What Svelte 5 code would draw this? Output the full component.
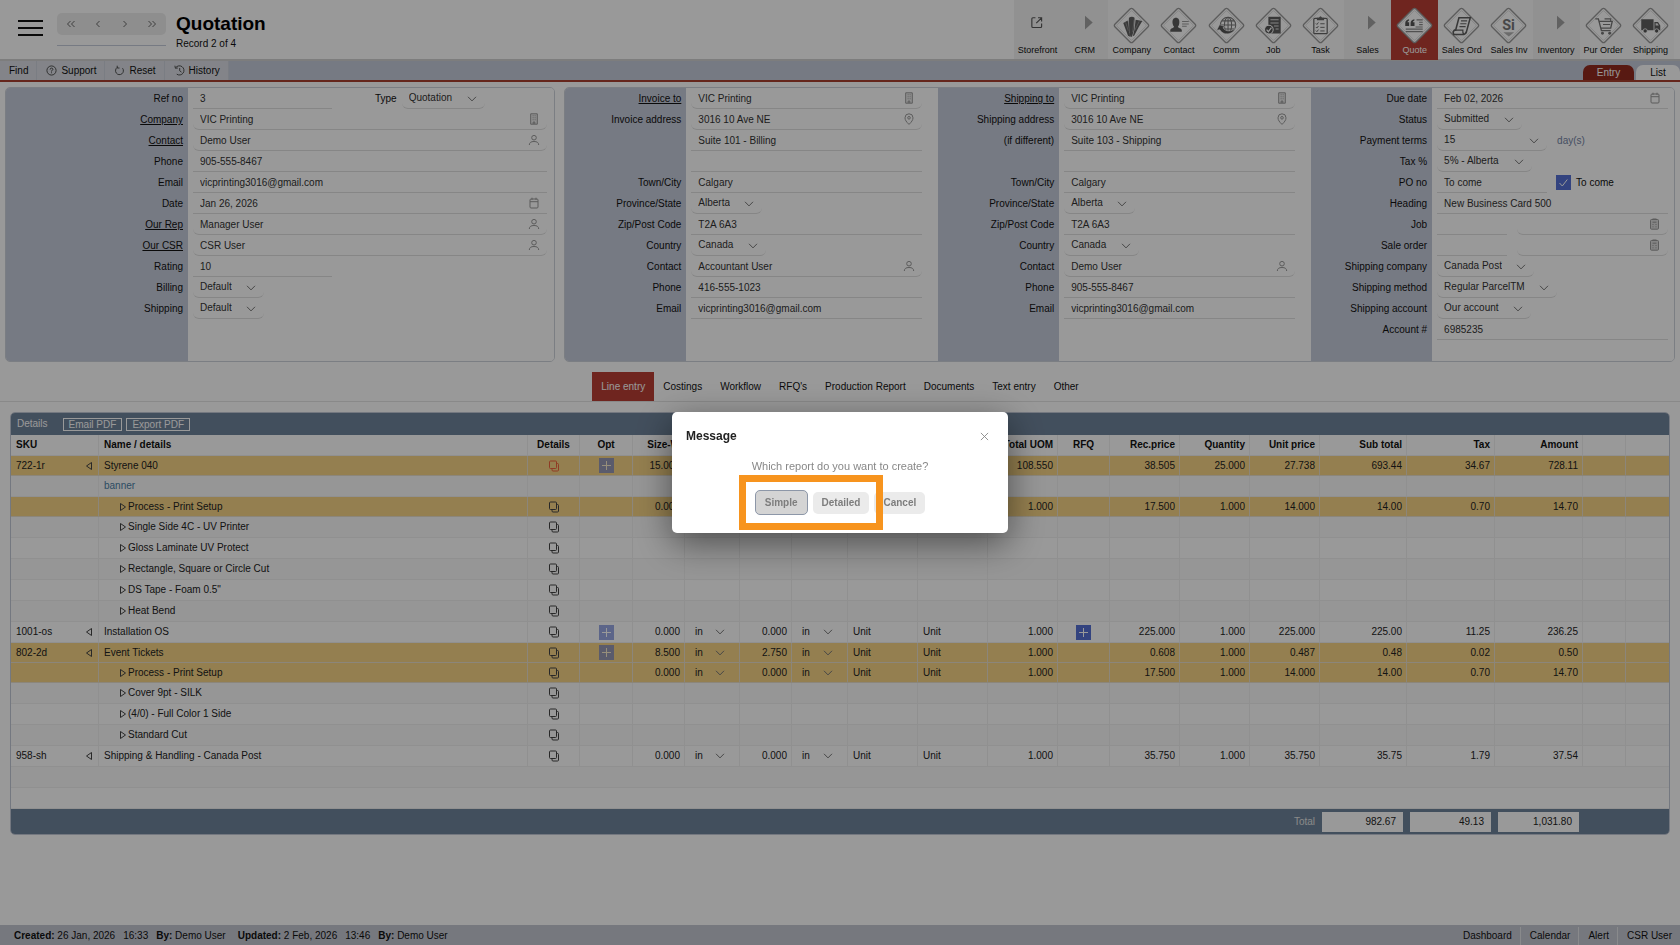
<script>
  const modules = [
    { name: 'Storefront', icon: 'storefront', group: true },
    { name: 'CRM', icon: 'arrow', group: true },
    { name: 'Company', icon: 'company' },
    { name: 'Contact', icon: 'contact' },
    { name: 'Comm', icon: 'comm' },
    { name: 'Job', icon: 'job' },
    { name: 'Task', icon: 'task' },
    { name: 'Sales', icon: 'arrow', group: true },
    { name: 'Quote', icon: 'quote', active: true },
    { name: 'Sales Ord', icon: 'order' },
    { name: 'Sales Inv', icon: 'invoice' },
    { name: 'Inventory', icon: 'arrow', group: true },
    { name: 'Pur Order', icon: 'cart' },
    { name: 'Shipping', icon: 'truck' }
  ];

  const customer = [
    { id: 'ref', label: 'Ref no', value: '3', short: true, type: 'Quotation' },
    { id: 'company', label: 'Company', link: true, value: 'VIC Printing', icon: 'building' },
    { id: 'contact', label: 'Contact', link: true, value: 'Demo User', icon: 'person' },
    { id: 'phone', label: 'Phone', value: '905-555-8467' },
    { id: 'email', label: 'Email', value: 'vicprinting3016@gmail.com' },
    { id: 'date', label: 'Date', value: 'Jan 26, 2026', icon: 'calendar', flat: true },
    { id: 'rep', label: 'Our Rep', link: true, value: 'Manager User', icon: 'person' },
    { id: 'csr', label: 'Our CSR', link: true, value: 'CSR User', icon: 'person' },
    { id: 'rating', label: 'Rating', value: '10', short: true },
    { id: 'billing', label: 'Billing', value: 'Default', select: true },
    { id: 'shipping', label: 'Shipping', value: 'Default', select: true }
  ];

  const address = (key, title, addressLabel, second, suite, contact, phone) => [
    { id: key + '-to', label: title, link: true, value: 'VIC Printing', icon: 'building' },
    { id: key + '-address', label: addressLabel, value: '3016 10 Ave NE', icon: 'pin' },
    { id: key + '-address2', label: second, value: suite },
    { id: key + '-address3', label: '', value: '' },
    { id: key + '-town', label: 'Town/City', value: 'Calgary' },
    { id: key + '-state', label: 'Province/State', value: 'Alberta', select: true },
    { id: key + '-zip', label: 'Zip/Post Code', value: 'T2A 6A3' },
    { id: key + '-country', label: 'Country', value: 'Canada', select: true },
    { id: key + '-contact', label: 'Contact', value: contact, icon: 'person' },
    { id: key + '-phone', label: 'Phone', value: phone },
    { id: key + '-email', label: 'Email', value: 'vicprinting3016@gmail.com' }
  ];
  const invoiceTo = address('inv', 'Invoice to', 'Invoice address', '', 'Suite 101 - Billing', 'Accountant User', '416-555-1023');
  const shipTo = address('ship', 'Shipping to', 'Shipping address', '(if different)', 'Suite 103 - Shipping', 'Demo User', '905-555-8467');

  const order = [
    { id: 'due', label: 'Due date', value: 'Feb 02, 2026', icon: 'calendar', flat: true },
    { id: 'status', label: 'Status', value: 'Submitted', select: true },
    { id: 'terms', label: 'Payment terms', value: '15', select: true, fixed: true, after: 'day(s)' },
    { id: 'tax', label: 'Tax %', value: '5% - Alberta', select: true },
    { id: 'po', label: 'PO no', value: 'To come', fixed: true, check: 'To come' },
    { id: 'heading', label: 'Heading', value: 'New Business Card 500' },
    { id: 'job', label: 'Job', pair: true },
    { id: 'sale', label: 'Sale order', pair: true },
    { id: 'carrier', label: 'Shipping company', value: 'Canada Post', select: true },
    { id: 'method', label: 'Shipping method', value: 'Regular ParcelTM', select: true },
    { id: 'account', label: 'Shipping account', value: 'Our account', select: true },
    { id: 'number', label: 'Account #', value: '6985235' }
  ];

  const tabs = ['Line entry', 'Costings', 'Workflow', "RFQ's", 'Production Report', 'Documents', 'Text entry', 'Other'];

  const columns = [
    ['SKU', 88], ['Name / details', 0], ['Details', 52, 'mid'], ['Opt', 53, 'mid'], ['Size-W', 52, 'num'],
    ['', 55], ['', 52], ['', 56], ['', 70], ['', 70], ['Total UOM', 70, 'num'], ['RFQ', 52, 'mid'],
    ['Rec.price', 70, 'num'], ['Quantity', 70, 'num'], ['Unit price', 70, 'num'], ['Sub total', 87, 'num'],
    ['Tax', 88, 'num'], ['Amount', 88, 'num'], ['', 43], ['', 43]
  ];

  const lines = [
    { sku: '722-1r', name: 'Styrene 040', fill: true, hot: true, opt: true, w: '15.000', uom: '108.550', money: ['38.505', '25.000', '27.738', '693.44', '34.67', '728.11'] },
    { name: 'banner', note: true },
    { name: 'Process - Print Setup', child: true, fill: true, w: '0.000', uom: '1.000', money: ['17.500', '1.000', '14.000', '14.00', '0.70', '14.70'] },
    { name: 'Single Side 4C - UV Printer', child: true },
    { name: 'Gloss Laminate UV Protect', child: true },
    { name: 'Rectangle, Square or Circle Cut', child: true },
    { name: 'DS Tape - Foam 0.5"', child: true },
    { name: 'Heat Bend', child: true },
    { sku: '1001-os', name: 'Installation OS', opt: true, rfq: true, w: '0.000', h: '0.000', uom: '1.000', money: ['225.000', '1.000', '225.000', '225.00', '11.25', '236.25'] },
    { sku: '802-2d', name: 'Event Tickets', fill: true, opt: true, w: '8.500', h: '2.750', uom: '1.000', money: ['0.608', '1.000', '0.487', '0.48', '0.02', '0.50'] },
    { name: 'Process - Print Setup', child: true, fill: true, w: '0.000', h: '0.000', uom: '1.000', money: ['17.500', '1.000', '14.000', '14.00', '0.70', '14.70'] },
    { name: 'Cover 9pt - SILK', child: true },
    { name: '(4/0) - Full Color 1 Side', child: true },
    { name: 'Standard Cut', child: true },
    { sku: '958-sh', name: 'Shipping & Handling - Canada Post', w: '0.000', h: '0.000', uom: '1.000', money: ['35.750', '1.000', '35.750', '35.75', '1.79', '37.54'] }
  ];
  const blanks = ['', '', '', '', '', ''];
</script>

{#snippet chevron()}
  <svg class="chevron" viewBox="0 0 10 6" aria-hidden="true"><path d="M1 .8 5 4.9 9 .8" /></svg>
{/snippet}

{#snippet fieldIcon(kind)}
  <svg class="field-icon" viewBox="0 0 12 12" aria-hidden="true">
    {#if kind === 'building'}
      <path d="M2.700.8h6.600v10.400H2.700z" fill="#eee" />
      <path d="M4.600 2.800h1M6.600 2.800h1M4.600 4.800h1M6.600 4.800h1M4.600 6.800h1M6.600 6.800h1M5.200 11V9h1.600v2" />
    {:else if kind === 'person'}
      <circle cx="6" cy="3.700" r="2.300" /><path d="M1.300 11c.1-2.500 1.700-3.500 4.700-3.500s4.600 1 4.700 3.500" />
    {:else if kind === 'pin'}
      <path d="M6 11.400C3.300 8.800 2 7 2 4.800a4 4 0 0 1 8 0C10 7 8.700 8.800 6 11.400Z" /><circle cx="6" cy="4.800" r="1.300" />
    {:else if kind === 'calendar'}
      <rect x="2" y="2" width="8" height="9" rx="1" /><path d="M2 4.700h8M4 .7v2.200M8 .7v2.200" />
    {:else}
      <rect x="1.500" y="1.500" width="8" height="9.700" rx="1" fill="#ddd" /><path d="M3.500 1h4M3.500 4.200h4M3.500 6.500h1M6.500 6.500h1M3.500 8.800h1M6.500 8.800h1" />
    {/if}
  </svg>
{/snippet}

{#snippet selectBox(id, value, label, fixed)}
  <span class="select" class:fixed>
    <select {id} aria-label={label}><option>{value}</option></select>
    {@render chevron()}
  </span>
{/snippet}

{#snippet column(rows)}
  {#each rows as f}
    <div class="row">
      <label for={f.id} class:link={f.link}>{f.label}</label>
      <div class="value">
        {#if f.pair}
          <span class="box code"><input id={f.id} type="text" /></span>
          <span class="box round grow"><input type="text" aria-label={f.label} />{@render fieldIcon('list')}</span>
        {:else if f.select}
          {@render selectBox(f.id, f.value, undefined, f.fixed)}
          {#if f.after}<span class="after">{f.after}</span>{/if}
        {:else}
          <span class="box" class:grow={!f.short && !f.fixed} class:short={f.short} class:fixed={f.fixed} class:round={f.icon && !f.flat}>
            <input id={f.id} type="text" value={f.value} aria-label={f.label ? undefined : 'Address line'} />
            {#if f.icon}{@render fieldIcon(f.icon)}{/if}
          </span>
          {#if f.type}
            <label class="type" for="type">Type</label>
            {@render selectBox('type', f.type)}
          {/if}
          {#if f.check}
            <label class="check">
              <input type="checkbox" checked />
              <svg viewBox="0 0 15 15" aria-hidden="true"><path d="m3.500 8 2.800 3 5-6.500" /></svg>
              {f.check}
            </label>
          {/if}
        {/if}
      </div>
    </div>
  {/each}
{/snippet}

{#snippet plus(soft, label)}
  <button class="plus" class:soft aria-label={label}>
    <svg viewBox="0 0 15 15" aria-hidden="true"><path d="M7.500 3v9M3 7.500h9" /></svg>
  </button>
{/snippet}

{#snippet moduleIcon(kind)}
  <svg class="module-icon" viewBox="0 0 36 36" aria-hidden="true">
    {#if kind === 'arrow'}
      <path d="M18.500 8.500 26 15l-7.500 7z" fill="#a2a2a2" />
    {:else if kind === 'storefront'}
      <path d="M16 10.500h-2.500q-1 0-1 1v7.500q0 1 1 1H21q1 0 1-1V16M18.500 10.500H22V14M22 10.500 16.800 15.700" fill="none" stroke="#555" stroke-width="1.100" />
    {:else}
      <rect x="5.700" y="5.700" width="24.600" height="24.600" rx="2" transform="rotate(45 18 18)" fill="#fff" stroke="#999" stroke-width="1.300" />
      <rect x="7.600" y="7.600" width="20.800" height="20.800" rx="1" transform="rotate(45 18 18)" fill="none" stroke="#d8d8d8" stroke-width=".7" />
      {#if kind === 'company'}
        <g fill="#616161">
          <path d="M15.500 10.500q3-2 5.500 0l-.5 11-2 7.500h-1.500l-2-7.500z" />
          <path d="m10 15.500 4.300-2.300 2 12.300.3 3.500-2-1z" />
          <path d="m22 12.500 6.500 1.200-3.200 5.300-4.600 8.800-1.400.7 1.700-7.300z" />
        </g>
        <path d="m15 13.500 1.200 12M20.500 12.500l-1.300 12M12.300 15l2.500 8M25.500 14 21 23" stroke="#bbb" stroke-width=".5" fill="none" />
      {:else if kind === 'contact'}
        <path d="M12.300 16.200c-.6-3.700.9-5.700 3.200-5.700s3.800 2 3.200 5.700c-.3 1.700-.9 2.300-1.300 3 .3 1.300 3.600 1.500 3.800 3.100v1.900H10v-1.900c.2-1.600 3.400-1.800 3.700-3.100-.4-.7-1.100-1.300-1.400-3Z" fill="#5c5c5c" />
        <path d="M21.500 14.200H28M21.500 16.500H28M21.500 18.800h4.500" stroke="#9b9b9b" fill="none" />
      {:else if kind === 'comm'}
        <g fill="none" stroke="#777"><circle cx="19.500" cy="17.500" r="7.500" /><ellipse cx="19.500" cy="17.500" rx="3.500" ry="7.500" /><path d="M12 17.500h15M13.500 13.500h12M13.500 21.500h12M19.500 10v15" /></g>
        <path d="m8.500 22.500 2.800-5.300 5.500 2-2.200.9c2.400 4.200 8 4.200 11.900.5-2.500 6.500-11.700 7.600-15 1.500z" fill="#555" stroke="#fff" stroke-width=".5" />
      {:else if kind === 'job'}
        <path d="M13 9.500h12v16.300H13z" fill="#5e5e5e" /><path d="M15 12.500h8M15 15.500h8M18.500 18.500H23M20 21.500h3" stroke="#ddd" />
        <circle cx="13.500" cy="22" r="4.200" fill="#555" stroke="#fff" /><path d="m11.300 22 1.700 2 3-4" fill="none" stroke="#fff" stroke-width="1.200" />
      {:else if kind === 'task'}
        <rect x="11.500" y="11" width="13" height="15" rx="1" fill="none" stroke="#666" stroke-width="1.200" />
        <path d="M14.500 12.800v-2.300h2q1.500-3 3 0h2v2.300z" fill="#666" />
        <path d="m13.500 16 1 1 1.500-2M13.500 19.500l1 1 1.500-2M13.500 23l1 1 1.500-2M17.800 16.300H22M17.800 19.800H22M17.800 23.300H22" fill="none" stroke="#666" stroke-width=".9" />
      {:else if kind === 'quote'}
        <path d="M9 17.500v-2q.2-3 3.700-3.600v1.200q-1.500.6-1.500 1.700h1.600v3.700H9zM14.200 17.500v-2q.2-3 3.700-3.600v1.200q-1.500.6-1.500 1.700H18v3.700h-3.800z" fill="#555" />
        <path d="M20 12.500h6M22.500 14.800H26M22.500 17.200H26M19 19.500h7M9.500 21.500H26M9.500 24H26" stroke="#888" stroke-width="1.100" />
      {:else if kind === 'order'}
        <path d="M15.500 10.500h11l-3.700 13.700q-1 2.600-3.800 2.600h-8.500q-1.500-2.600.6-4.300h1.200z" fill="#fff" stroke="#5e5e5e" stroke-width="1.500" />
        <path d="M12.300 22.500h7q-.3 2.500.8 3.800" fill="none" stroke="#5e5e5e" stroke-width="1.200" />
        <path d="M17.500 13.500h6M16.800 16.300h6M16 19.100h6" stroke="#666" stroke-width="1.100" />
      {:else if kind === 'invoice'}
        <text x="18" y="22" text-anchor="middle">Si</text>
        <path d="M13 24.500h10.500l-5.200 4.300z" fill="#b3b3b3" />
      {:else if kind === 'cart'}
        <path d="M10 11.500h3l3 11.500h9M14 14h12.500l-1.500 6.500h-9.200" fill="none" stroke="#777" stroke-width="1.300" />
        <path d="M17.500 17h7M19 11.500h6v3" fill="none" stroke="#777" stroke-width="1.100" /><circle cx="17" cy="25.500" r="1.400" fill="#777" /><circle cx="24" cy="25.500" r="1.400" fill="#777" />
      {:else}
        <path d="M9 12h12v10.500H9zM21.800 14.500h3.500l2.200 3.500v4.500h-5.700z" fill="#606060" /><path d="M23 15.700h1.700l1.400 2.300H23z" fill="#eee" />
        <circle cx="12.800" cy="23.300" r="2.100" fill="#555" stroke="#fff" stroke-width=".8" /><circle cx="24" cy="23.300" r="2.100" fill="#555" stroke="#fff" stroke-width=".8" />
      {/if}
    {/if}
  </svg>
{/snippet}

<div class="page">
  <header>
    <button class="menu" aria-label="Menu"><i></i><i></i><i></i></button>
    <div class="pager">
      <div class="pager-buttons">
        <button aria-label="First"><svg viewBox="0 0 10 8"><path d="M4.500 1 1.500 4l3 3M8.500 1l-3 3 3 3" /></svg></button>
        <button aria-label="Previous"><svg viewBox="0 0 10 8"><path d="M6.500 1l-3 3 3 3" /></svg></button>
        <button aria-label="Next"><svg viewBox="0 0 10 8"><path d="m3.500 1 3 3-3 3" /></svg></button>
        <button aria-label="Last"><svg viewBox="0 0 10 8"><path d="m1.500 1 3 3-3 3M5.500 1l3 3-3 3" /></svg></button>
      </div>
    </div>
    <div class="title">
      <h1>Quotation</h1>
      <p>Record 2 of 4</p>
    </div>
    <nav class="modules">
      {#each modules as m}
        <button class:group={m.group} class:active={m.active}>
          {@render moduleIcon(m.icon)}
          <span>{m.name}</span>
        </button>
      {/each}
    </nav>
  </header>

  <div class="toolbar">
    <button>Find</button>
    <button><svg viewBox="0 0 12 12"><circle cx="6" cy="6" r="5" /><path d="M4.500 5q0-1.600 1.500-1.600T7.500 4.800Q7.500 5.700 6 6.300v.8M6 8v1" /></svg>Support</button>
    <button><svg viewBox="0 0 12 12"><path d="M3.500 2.700A4.300 4.300 0 1 0 9.300 3.500M3.500.8v2.500H6" /></svg>Reset</button>
    <button><svg viewBox="0 0 12 12"><path d="M1.800 3A5 5 0 1 1 3 10M1 .8 1.500 3.500 4.200 3.300M6.200 3.300v3l2 1.500" /></svg>History</button>
    <div class="views"><button class="on">Entry</button><button>List</button></div>
  </div>

  <main>
    <div class="panels">
      <section class="panel">
        <div class="col wide">{@render column(customer)}</div>
      </section>
      <section class="panel three">
        <div class="col spaced">{@render column(invoiceTo)}</div>
        <div class="col spaced">{@render column(shipTo)}</div>
        <div class="col">{@render column(order)}</div>
      </section>
    </div>

    <nav class="tabs">
      {#each tabs as tab, i}<button class:on={i === 0}>{tab}</button>{/each}
    </nav>

    <section class="grid">
      <div class="band">
        <span>Details</span>
        <button>Email PDF</button>
        <button>Export PDF</button>
      </div>
      <table>
        <colgroup>
          {#each columns as c}<col style={c[1] ? `width: ${c[1]}px` : ''} />{/each}
        </colgroup>
        <thead>
          <tr>{#each columns as c}<th class={c[2]}>{c[0]}</th>{/each}</tr>
        </thead>
        <tbody>
          {#each lines as l}
            <tr class:fill={l.fill}>
              <td>
                {#if l.sku}
                  <div class="sku">{l.sku}<svg class="tri" viewBox="0 0 8 10" aria-hidden="true"><path d="M6.500 1.500v7L1.500 5z" /></svg></div>
                {/if}
              </td>
              <td class:note={l.note}>
                {#if l.child}
                  <div class="child"><svg class="tri" viewBox="0 0 8 10" aria-hidden="true"><path d="M1.500 1.500v7l5-3.500z" /></svg>{l.name}</div>
                {:else}{l.name}{/if}
              </td>
              <td class="mid">
                {#if !l.note}
                  <button class="copy" class:hot={l.hot} aria-label="Details">
                    <svg viewBox="0 0 12 12"><rect x="1.500" y="1" width="7" height="7.500" rx="1" /><path d="M4 8.500v1.500q0 1 1 1h4.500q1 0 1-1V4.500q0-1-1-1h-1" /></svg>
                  </button>
                {/if}
              </td>
              <td class="mid">{#if l.opt}{@render plus(true, 'Options')}{/if}</td>
              <td class="num">{l.w ?? ''}</td>
              <td class="unit">{#if l.h}{@render selectBox(undefined, 'in', 'Width unit')}{/if}</td>
              <td class="num">{l.h ?? ''}</td>
              <td class="unit">{#if l.h}{@render selectBox(undefined, 'in', 'Height unit')}{/if}</td>
              <td>{l.h ? 'Unit' : ''}</td>
              <td>{l.h ? 'Unit' : ''}</td>
              <td class="num">{l.uom ?? ''}</td>
              <td class="mid">{#if l.rfq}{@render plus(false, 'Request for quote')}{/if}</td>
              {#each l.money ?? blanks as v}<td class="num">{v}</td>{/each}
              <td></td>
              <td></td>
            </tr>
          {/each}
          <tr><td colspan="20"></td></tr>
          <tr><td colspan="20"></td></tr>
        </tbody>
      </table>
      <div class="totals">
        <span>Total</span>
        <output>982.67</output>
        <output>49.13</output>
        <output>1,031.80</output>
      </div>
    </section>
  </main>

  <footer>
    <p><b>Created:</b> 26 Jan, 2026</p>
    <p>16:33</p>
    <p class="by"><b>By:</b> Demo User</p>
    <p><b>Updated:</b> 2 Feb, 2026</p>
    <p>13:46</p>
    <p><b>By:</b> Demo User</p>
    <nav><a href="#dashboard">Dashboard</a><a href="#calendar">Calendar</a><a href="#alert">Alert</a><a href="#user">CSR User</a></nav>
  </footer>
</div>

<div class="overlay">
  <div class="dialog" role="dialog" aria-modal="true" aria-labelledby="dialog-title">
    <div class="dialog-head">
      <h2 id="dialog-title">Message</h2>
      <button aria-label="Close"><svg viewBox="0 0 10 10"><path d="m1 1 8 8M9 1 1 9" /></svg></button>
    </div>
    <p>Which report do you want to create?</p>
    <div class="choices">
      <button class="chosen">Simple</button>
      <button>Detailed</button>
      <button>Cancel</button>
      <div class="marker" aria-hidden="true"></div>
    </div>
  </div>
</div>

<style>
  :global(body) {
    margin: 0;
    background: #fff;
  }
  .page,
  .overlay {
    font: 10px/12px 'Liberation Sans', Arial, sans-serif;
    color: #111;
  }
  .page :global(*),
  .overlay :global(*) {
    box-sizing: border-box;
  }
  button,
  input,
  select {
    font: inherit;
    color: inherit;
    border: 0;
    background: none;
    padding: 0;
    margin: 0;
    border-radius: 0;
  }
  h1,
  h2,
  p {
    margin: 0;
  }
  svg {
    fill: none;
    stroke: #444;
    flex: none;
  }
  .page {
    min-height: 100vh;
    display: flex;
    flex-direction: column;
  }

  header {
    display: flex;
    align-items: flex-start;
    height: 61px;
    border-bottom: 2px solid #d0d0d0;
    padding: 0 6px 0 18px;
  }
  .menu {
    width: 25px;
    margin-top: 20px;
    display: flex;
    flex-direction: column;
    gap: 5px;
  }
  .menu i {
    display: block;
    width: 100%;
    height: 2px;
    background: #111;
  }
  .pager {
    width: 109px;
    height: 46px;
    margin-left: 14px;
    padding-top: 13px;
    border-bottom: 1px solid #c5cbda;
  }
  .pager-buttons {
    display: flex;
    height: 22px;
    background: #ededed;
    border-radius: 5px;
  }
  .pager-buttons button {
    flex: 1;
    display: grid;
    place-items: center;
  }
  .pager-buttons svg {
    width: 10px;
    height: 8px;
    stroke: #666;
  }
  .title {
    margin: 13px auto 0 10px;
  }
  h1 {
    font-size: 19px;
    line-height: 22px;
    color: #000;
  }
  .title p {
    margin-top: 3px;
  }
  .modules {
    display: flex;
    width: 660px;
    height: 59px;
  }
  .modules button {
    flex: 1 1 0;
    min-width: 0;
    display: flex;
    flex-direction: column;
    align-items: center;
    padding-top: 7px;
    font-size: 9px;
    line-height: 13px;
    white-space: nowrap;
    background: #fafafa;
  }
  .modules button.group {
    background: #f2f2f2;
  }
  .modules button.active {
    background: #b93f34;
    color: #fff;
    height: 60px;
  }
  .module-icon {
    width: 37px;
    height: 37px;
    stroke: none;
  }
  .module-icon text {
    font: bold 14px Roboto, sans-serif;
    fill: #777;
  }

  .toolbar {
    display: flex;
    height: 21px;
    background: #c5cbda;
    border-bottom: 2px solid #a9402f;
  }
  .toolbar > button {
    display: flex;
    align-items: center;
    gap: 4px;
    padding: 0 8px 0 9px;
    background: #dadde4;
    border-right: 1px solid #ccd1da;
  }
  .toolbar svg {
    width: 11px;
    height: 11px;
  }
  .views {
    margin-left: auto;
    align-self: flex-end;
    display: flex;
    gap: 2px;
  }
  .views button {
    height: 15px;
    width: 44px;
    background: #fff;
    border-radius: 7px 7px 0 0;
  }
  .views .on {
    width: 51px;
    background: #932a1e;
    color: #fff;
  }

  .panels {
    display: grid;
    grid-template-columns: 550fr 1110fr;
    gap: 9px;
    padding: 5px 5px 0;
  }
  .panel {
    display: grid;
    border: 1px solid #ced3da;
    border-radius: 5px;
    overflow: hidden;
  }
  .three {
    grid-template-columns: 373fr 373fr 363fr;
  }
  .col {
    --label: 121px;
    --end: 6px;
    padding-bottom: 21px;
    background: linear-gradient(to right, #c5cbda var(--label), #fff 0);
  }
  .wide {
    --label: 182px;
    --end: 7px;
  }
  .spaced {
    --end: 16px;
  }
  .row {
    display: grid;
    grid-template-columns: var(--label) 1fr;
    height: 21px;
    align-items: stretch;
  }
  .row > label {
    text-align: right;
    padding: 5px 5px 0 0;
  }
  .link {
    text-decoration: underline;
  }
  .value {
    display: flex;
    padding: 0 var(--end) 0 5px;
    min-width: 0;
    color: #333;
  }
  .box {
    display: flex;
    align-items: center;
    padding: 0 7px;
    border-bottom: 1px solid #dfdfdf;
    min-width: 0;
  }
  .box input {
    flex: 1;
    width: 100%;
    min-width: 0;
    height: 18px;
    outline: 0;
  }
  .grow {
    flex: 1;
  }
  .short {
    width: 139px;
  }
  .box.fixed,
  .select.fixed,
  .select.fixed select {
    width: 110px;
  }
  .code {
    width: 70px;
    margin-right: 10px;
  }
  .round {
    border-radius: 0 0 6px 6px;
  }
  .field-icon {
    width: 12px;
    height: 12px;
    stroke: #999;
  }
  .select {
    position: relative;
    display: flex;
  }
  select {
    appearance: none;
    height: 21px;
    padding: 0 32px 0 7px;
    border-bottom: 1px solid #dfdfdf;
    border-radius: 0 0 6px 6px;
  }
  .chevron {
    position: absolute;
    right: 8px;
    top: 8px;
    width: 10px;
    height: 6px;
    stroke: #777;
    pointer-events: none;
  }
  .after {
    padding: 5px 10px 0;
    color: #7484a4;
  }
  .type {
    margin: 5px 5px 0 43px;
    color: #111;
  }
  .check {
    display: flex;
    align-items: center;
    gap: 5px;
    margin-left: 9px;
    position: relative;
    white-space: nowrap;
    color: #111;
  }
  .check input {
    appearance: none;
    width: 15px;
    height: 15px;
    background: #5671d4;
  }
  .check svg {
    position: absolute;
    left: 0;
    width: 15px;
    height: 15px;
    stroke: #fff;
  }

  .tabs {
    display: flex;
    justify-content: center;
    margin-top: 10px;
    border-bottom: 1px solid #e4e4e4;
  }
  .tabs button {
    height: 29px;
    padding: 0 9px;
  }
  .tabs .on {
    background: #b93f34;
    color: #fff;
  }

  .grid {
    margin: 10px 10px 0;
    border: 1px solid #c2c8d6;
    border-radius: 5px;
    overflow: hidden;
  }
  .band {
    display: flex;
    align-items: center;
    gap: 4px;
    height: 22px;
    padding-left: 6px;
    background: #6f849b;
    color: #fff;
  }
  .band span {
    margin-right: 11px;
  }
  .band button {
    height: 13px;
    line-height: 11px;
    padding: 0 5px;
    border: 1px solid #fff;
  }
  table {
    width: 100%;
    table-layout: fixed;
    border-collapse: separate;
    border-spacing: 0;
  }
  th,
  td {
    height: 21px;
    padding: 0 5px;
    text-align: left;
    white-space: nowrap;
    border-right: 1px solid #f0f0f0;
    border-bottom: 1px solid #f0f0f0;
    color: #222;
  }
  th {
    color: #111;
  }
  tbody tr:nth-child(even) td {
    background: #fafafa;
  }
  tbody tr.fill td {
    height: 20px;
    background: #f7d485;
    border-color: #e9e0cc;
  }
  th:last-child,
  td:last-child {
    border-right: 0;
  }
  th.num,
  td.num {
    text-align: right;
    padding-right: 4px;
  }
  .mid {
    text-align: center;
  }
  td.note {
    color: #4c7fa6;
  }
  .sku {
    display: flex;
    justify-content: space-between;
    align-items: center;
  }
  .child {
    display: flex;
    align-items: center;
    gap: 1px;
    padding-left: 15px;
  }
  .tri {
    width: 8px;
    height: 10px;
  }
  td.unit {
    padding: 0 6px 0 3px;
  }
  .unit select {
    width: 100%;
    height: 18px;
    padding-right: 20px;
    border: 0;
  }
  .unit .select :global(.chevron) {
    top: 6px;
  }
  .copy,
  .plus {
    display: block;
    margin: 0 auto;
    height: 15px;
  }
  .copy svg {
    display: block;
    width: 12px;
    height: 12px;
  }
  .hot svg {
    stroke: #f0633d;
  }
  .plus {
    width: 15px;
    background: #5671d4;
  }
  .plus.soft {
    opacity: 0.6;
  }
  .plus svg {
    display: block;
    width: 15px;
    height: 15px;
    stroke: #fff;
  }
  .totals {
    display: flex;
    justify-content: flex-end;
    align-items: center;
    gap: 7px;
    height: 25px;
    padding-right: 90px;
    background: #6f849b;
    color: #e4e4e4;
  }
  .totals output {
    width: 81px;
    padding: 4px 7px;
    text-align: right;
    background: #fff;
    color: #222;
  }

  footer {
    display: flex;
    align-items: center;
    gap: 8px;
    height: 20px;
    margin-top: auto;
    padding: 2px 0 0 14px;
    background: #c5c8d3;
  }
  footer .by {
    margin-right: 4px;
  }
  footer nav {
    display: flex;
    align-self: stretch;
    margin-left: auto;
  }
  footer a {
    padding: 3px 8px 0 9px;
    color: inherit;
    text-decoration: none;
    border-left: 1px solid #e4e6ea;
  }
  footer a:first-child {
    border-left: 0;
  }

  .overlay {
    position: fixed;
    inset: 0;
    display: flex;
    align-items: center;
    justify-content: center;
    background: rgba(0, 0, 0, 0.4);
  }
  .dialog {
    width: 336px;
    padding: 16px 14px 18px;
    background: #fff;
    border-radius: 5px;
    box-shadow: 0 10px 36px rgba(0, 0, 0, 0.5);
    text-align: center;
  }
  .dialog-head {
    display: flex;
    justify-content: space-between;
    align-items: center;
  }
  h2 {
    font-size: 12px;
    line-height: 16px;
    color: #222;
  }
  .dialog-head svg {
    display: block;
    width: 9px;
    height: 9px;
    margin-right: 5px;
    stroke: #888;
  }
  .dialog p {
    margin-top: 15px;
    font-size: 11px;
    line-height: 14px;
    color: #888;
  }
  .choices {
    position: relative;
    display: flex;
    justify-content: center;
    align-items: center;
    gap: 5px;
    margin-top: 17px;
  }
  .choices button {
    height: 22px;
    padding: 0 9px;
    font-weight: bold;
    color: #7d7d7d;
    background: #ebebeb;
    border-radius: 5px;
  }
  .choices .chosen {
    height: 25px;
    border: 1px solid #8d97a8;
    background: #d4d4d4;
  }
  .marker {
    position: absolute;
    left: 53px;
    top: -15px;
    width: 144px;
    height: 55px;
    border: 7px solid #f7941e;
  }
</style>
